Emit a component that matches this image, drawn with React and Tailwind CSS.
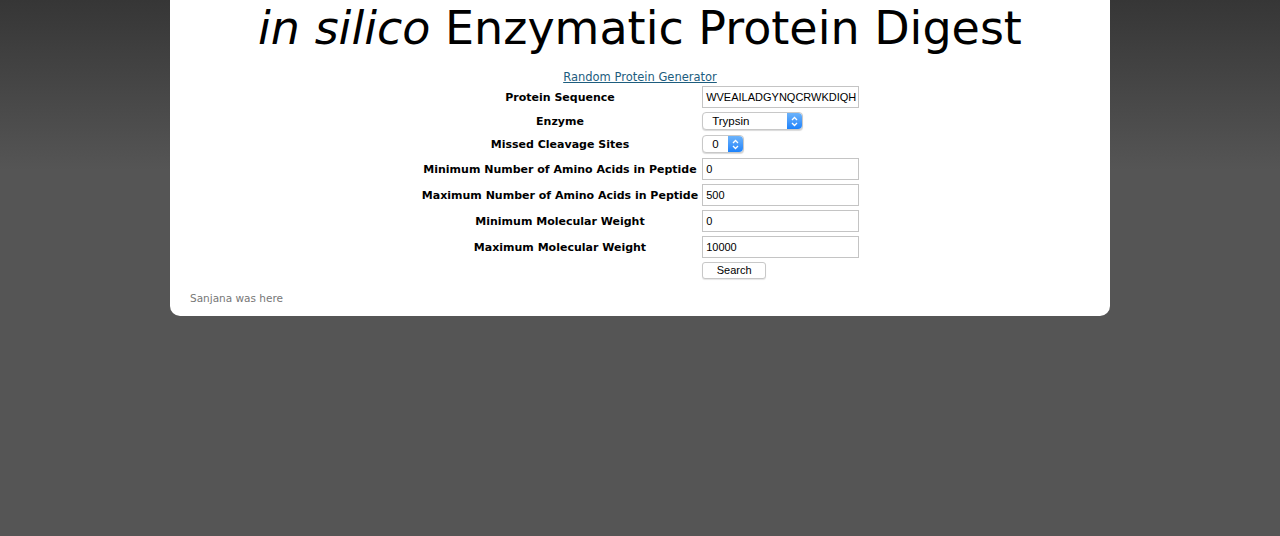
import React from 'react'

const rows = [
  { label: 'Minimum Number of Amino Acids in Peptide', value: '0' },
  { label: 'Maximum Number of Amino Acids in Peptide', value: '500' },
  { label: 'Minimum Molecular Weight', value: '0' },
  { label: 'Maximum Molecular Weight', value: '10000' },
]

const Stepper = () => (
  <span className="flex h-full w-[15px] items-center justify-center rounded-r-[4px] bg-gradient-to-b from-[#6cb3fa] to-[#1a82fb]">
    <svg width="7" height="11" viewBox="0 0 7 11" fill="none" stroke="white" strokeWidth="1.3">
      <path d="M1 4 L3.5 1.5 L6 4" />
      <path d="M1 7 L3.5 9.5 L6 7" />
    </svg>
  </span>
)

const FakeSelect = ({ value, width }) => (
  <div className={`flex h-[18px] items-stretch rounded-[4px] border border-[#c8c8c8] bg-white shadow-[0_1px_1px_rgba(0,0,0,0.15)] ${width}`}>
    <span className="flex-1 pl-[9px] text-[11.5px] leading-[16px] text-black" style={{ fontFamily: '"Liberation Sans", Arial, sans-serif' }}>{value}</span>
    <Stepper />
  </div>
)

const TextBox = ({ value }) => (
  <div className="flex h-[22px] w-[157px] items-center overflow-hidden whitespace-nowrap border border-[#c4c4c4] bg-white pl-[3px] text-[11px] text-black" style={{ fontFamily: '"Liberation Sans", Arial, sans-serif' }}>
    {value}
  </div>
)

const Label = ({ children }) => (
  <div className="flex items-center justify-center whitespace-nowrap px-[1px] pt-[2px] text-[11px] font-bold text-black">{children}</div>
)

export default function App() {
  return (
    <div className="min-h-[536px] bg-[linear-gradient(to_bottom,#363636_0px,#555555_170px,#555555_100%)]" style={{ fontFamily: '"DejaVu Sans", Verdana, sans-serif' }}>
      <div className="mx-auto flex h-[316px] w-[940px] flex-col rounded-b-[10px] bg-white">
        <h1 className="text-center text-[46px] leading-[56px] text-black">
          <em>in silico</em> Enzymatic Protein Digest
        </h1>

        <div className="mt-[13px] text-center leading-[14px]">
          <a href="#" className="text-[11.5px] text-[#1d5d7e] underline">Random Protein Generator</a>
        </div>

        <div className="mx-auto grid grid-cols-[auto_157px] gap-x-[3px]">
          <Label>Protein Sequence</Label>
          <div className="py-[2px]"><TextBox value="WVEAILADGYNQCRWKDIQH" /></div>

          <Label>Enzyme</Label>
          <div className="py-[2px]"><FakeSelect value="Trypsin" width="w-[101px]" /></div>

          <Label>Missed Cleavage Sites</Label>
          <div className="py-[3px]"><FakeSelect value="0" width="w-[42px]" /></div>

          {rows.map((r) => (
            <React.Fragment key={r.label}>
              <Label>{r.label}</Label>
              <div className="py-[2px]"><TextBox value={r.value} /></div>
            </React.Fragment>
          ))}

          <div />
          <div className="flex py-[2px]">
            <button className="h-[17px] w-[64px] rounded-[3px] border border-[#c8c8c8] bg-white text-[11px] leading-[15px] text-black shadow-[0_1px_1px_rgba(0,0,0,0.1)]" style={{ fontFamily: '"Liberation Sans", Arial, sans-serif' }}>
              Search
            </button>
          </div>
        </div>

        <div className="ml-[20px] mt-auto mb-[9px] text-[10.5px] text-[#777777]">Sanjana was here</div>
      </div>
    </div>
  )
}
